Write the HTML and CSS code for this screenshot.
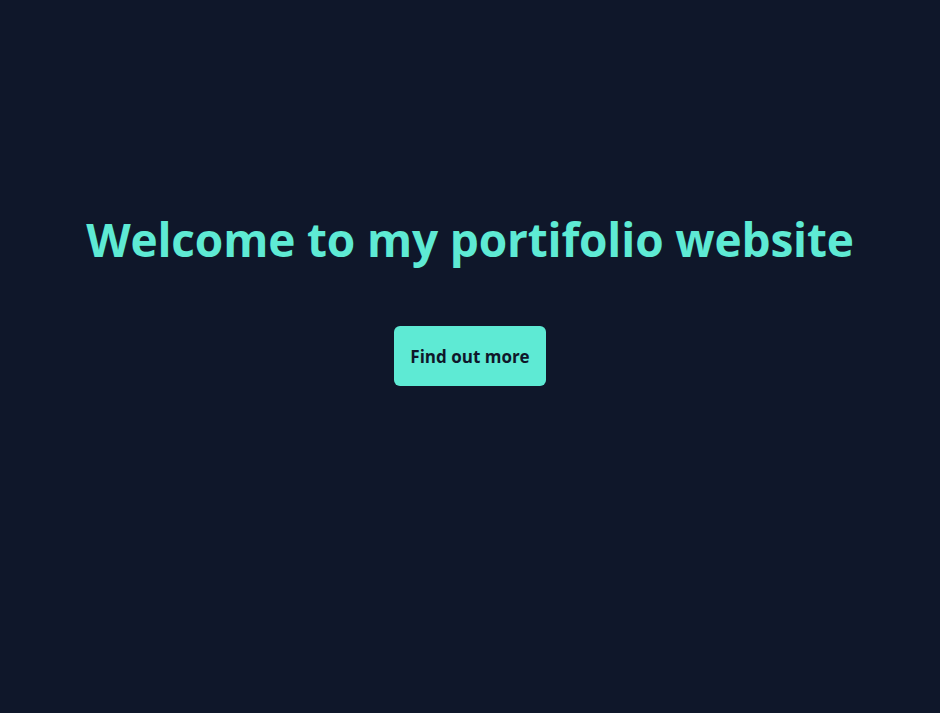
FILE: index.html
```html
<!DOCTYPE html>
<html lang="en">
<head>
<meta charset="utf-8">
<title>Portfolio</title>
<link rel="stylesheet" href="styles.css">
</head>
<body>
<main class="hero">
  <h1 class="hero-title">Welcome to my portifolio website</h1>
  <a class="hero-button" href="#">Find out more</a>
</main>
</body>
</html>
```

FILE: styles.css
```css
html, body {
  margin: 0;
  padding: 0;
  height: 100%;
}
body {
  background: #0f172a;
  font-family: "Open Sans", "Noto Sans", sans-serif;
}
.hero {
  display: flex;
  flex-direction: column;
  align-items: center;
  padding-top: 208px;
}
.hero-title {
  margin: 0;
  color: #5eead4;
  font-size: 46px;
  font-weight: 700;
  line-height: 62px;
  letter-spacing: -0.16px;
}
.hero-button {
  margin-top: 56px;
  display: flex;
  align-items: center;
  justify-content: center;
  width: 152px;
  height: 60px;
  box-sizing: border-box;
  background: #5eead4;
  color: #0f172a;
  border-radius: 6px;
  font-size: 17px;
  font-weight: 700;
  text-decoration: none;
}
```
